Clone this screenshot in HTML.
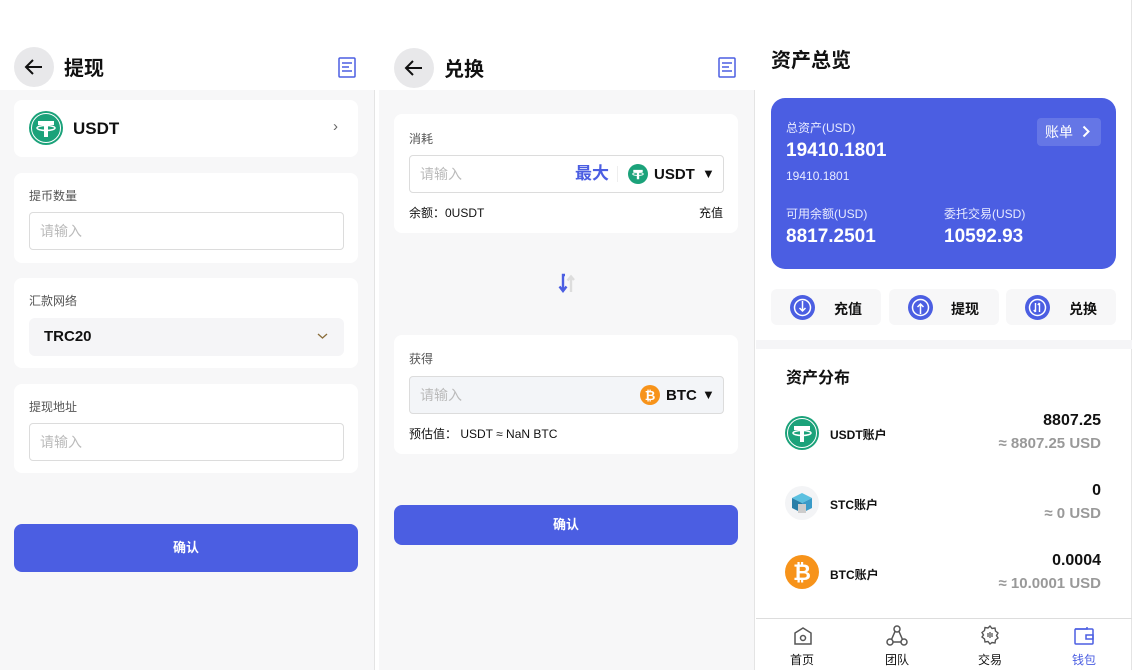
<!DOCTYPE html>
<html><head><meta charset="utf-8"><style>
*{margin:0;padding:0;box-sizing:border-box}
body{width:1137px;height:670px;background:#fff;position:relative;overflow:hidden;font-family:"Liberation Sans","Noto Sans CJK SC",sans-serif;color:#111}
.a{position:absolute}
.p{position:absolute;top:0;height:670px;background:#f7f7f8}
.card{position:absolute;background:#fff;border-radius:8px}
.lbl{position:absolute;font-size:12px;color:#555}
.inp{position:absolute;border:1px solid #dcdcdc;border-radius:4px;background:#fff;font-size:14px;color:#bbb;padding-left:10px;line-height:36px}
.btn{position:absolute;background:#4b5ee2;border-radius:8px;color:#fff;font-weight:bold;font-size:13px;text-align:center}
.back{position:absolute;width:40px;height:40px;border-radius:50%;background:#e8e8ea}
.ttl{position:absolute;font-size:20px;font-weight:bold}
.b{font-weight:bold}
.t{position:absolute;white-space:nowrap}
</style></head><body>

<!-- LEFT -->
<div class="p" style="left:0;width:375px;border-right:1px solid #e4e4e4"></div>
<div class="a" style="left:0;top:0;width:375px;height:90px;background:#fff"></div>
<div class="back" style="left:14px;top:47px"></div>
<svg class="a" style="left:23px;top:56px" width="22" height="22" viewBox="0 0 22 22"><path d="M19 11H3M10 4L3 11L10 18" stroke="#111" stroke-width="2" fill="none"/></svg>
<div class="ttl" style="left:64px;top:52px">提现</div>
<svg class="a" style="left:338px;top:57px" width="18" height="21" viewBox="0 0 18 21"><rect x="1" y="1" width="16" height="19" rx="1" fill="none" stroke="#4b5ee2" stroke-width="1.5"/><path d="M4 6h10M4 10h7M4 14h10" stroke="#4b5ee2" stroke-width="1.5"/></svg>

<div class="card" style="left:14px;top:100px;width:344px;height:57px"></div>
<svg class="a" style="left:29px;top:111px" width="34" height="34" viewBox="0 0 34 34"><circle cx="17" cy="17" r="17" fill="#1ba27a"/><circle cx="17" cy="17" r="14.5" fill="none" stroke="#fff" stroke-width="1"/><path d="M9 10h16v4h-6v12h-4V14H9z" fill="#fff"/><ellipse cx="17" cy="17" rx="9" ry="2.5" fill="none" stroke="#fff" stroke-width="1.5"/></svg>
<div class="t b" style="left:73px;top:119px;font-size:17px">USDT</div>
<div class="t" style="left:333px;top:118px;font-size:15px;color:#666">›</div>

<div class="card" style="left:14px;top:173px;width:344px;height:90px"></div>
<div class="lbl" style="left:29px;top:187px">提币数量</div>
<div class="inp" style="left:29px;top:212px;width:315px;height:38px">请输入</div>

<div class="card" style="left:14px;top:278px;width:344px;height:90px"></div>
<div class="lbl" style="left:29px;top:292px">汇款网络</div>
<div class="a" style="left:29px;top:318px;width:315px;height:38px;background:#f5f5f7;border-radius:6px"></div>
<div class="t b" style="left:44px;top:328px;font-size:15px">TRC20</div>
<svg class="a" style="left:317px;top:332px" width="11" height="8" viewBox="0 0 11 8"><path d="M1 2l4.5 4L10 2" stroke="#8a6d3b" stroke-width="1.3" fill="none"/></svg>

<div class="card" style="left:14px;top:384px;width:344px;height:89px"></div>
<div class="lbl" style="left:29px;top:398px">提现地址</div>
<div class="inp" style="left:29px;top:423px;width:315px;height:38px">请输入</div>

<div class="btn" style="left:14px;top:524px;width:344px;height:48px;line-height:48px">确认</div>

<!-- MIDDLE -->
<div class="p" style="left:379px;width:376px;border-right:1px solid #e4e4e4"></div>
<div class="a" style="left:379px;top:0;width:376px;height:90px;background:#fff"></div>
<div class="back" style="left:394px;top:48px"></div>
<svg class="a" style="left:403px;top:57px" width="22" height="22" viewBox="0 0 22 22"><path d="M19 11H3M10 4L3 11L10 18" stroke="#111" stroke-width="2" fill="none"/></svg>
<div class="ttl" style="left:444px;top:53px">兑换</div>
<svg class="a" style="left:718px;top:57px" width="18" height="21" viewBox="0 0 18 21"><rect x="1" y="1" width="16" height="19" rx="1" fill="none" stroke="#4b5ee2" stroke-width="1.5"/><path d="M4 6h10M4 10h7M4 14h10" stroke="#4b5ee2" stroke-width="1.5"/></svg>

<div class="card" style="left:394px;top:114px;width:344px;height:119px"></div>
<div class="lbl" style="left:409px;top:130px">消耗</div>
<div class="inp" style="left:409px;top:155px;width:315px;height:38px">请输入</div>
<div class="t b" style="left:575px;top:164px;font-size:17px;color:#4b5ee2;line-height:20px">最大</div>
<div class="a" style="left:617px;top:166px;width:1px;height:16px;background:#eee"></div>
<svg class="a" style="left:628px;top:164px" width="20" height="20" viewBox="0 0 34 34"><circle cx="17" cy="17" r="17" fill="#1ba27a"/><path d="M9 10h16v4h-6v12h-4V14H9z" fill="#fff"/><ellipse cx="17" cy="17" rx="9" ry="2.5" fill="none" stroke="#fff" stroke-width="1.5"/></svg>
<div class="t b" style="left:654px;top:166px;font-size:15px">USDT</div>
<div class="t" style="left:702px;top:166px;font-size:13px">▼</div>
<div class="t" style="left:409px;top:204px;font-size:12px">余额：0USDT</div>
<div class="t" style="left:699px;top:204px;font-size:12px">充值</div>

<svg class="a" style="left:556px;top:272px" width="22" height="22" viewBox="0 0 22 22"><path d="M15 20V5M11.5 8.5L15 4.5L18 8" stroke="#ddd" stroke-width="2.4" fill="none"/><path d="M9 3H7v15M3.5 14.5L7 19l3.5-4.5" stroke="#4b5ee2" stroke-width="2.4" fill="none"/></svg>

<div class="card" style="left:394px;top:335px;width:344px;height:119px"></div>
<div class="lbl" style="left:409px;top:350px">获得</div>
<div class="inp" style="left:409px;top:376px;width:315px;height:38px;background:#f3f5f8">请输入</div>
<svg class="a" style="left:640px;top:385px" width="20" height="20" viewBox="0 0 20 20"><circle cx="10" cy="10" r="10" fill="#f7931a"/><text x="10" y="15" font-size="13" font-weight="bold" fill="#fff" text-anchor="middle" font-family="Liberation Sans">₿</text></svg>
<div class="t b" style="left:666px;top:387px;font-size:15px">BTC</div>
<div class="t" style="left:702px;top:387px;font-size:13px">▼</div>
<div class="t" style="left:409px;top:425px;font-size:12px">预估值：&nbsp;USDT ≈ NaN BTC</div>

<div class="btn" style="left:394px;top:505px;width:344px;height:40px;line-height:40px">确认</div>

<!-- RIGHT -->
<div class="a" style="left:756px;top:0;width:376px;height:670px;background:#fff;border-right:1px solid #e4e4e4"></div>
<div class="ttl" style="left:771px;top:44px">资产总览</div>
<div class="a" style="left:771px;top:98px;width:345px;height:171px;background:#4b5ee2;border-radius:14px"></div>
<div class="t" style="left:786px;top:119px;font-size:12px;color:#e8ebff">总资产(USD)</div>
<div class="t b" style="left:786px;top:140px;font-size:19px;color:#fff">19410.1801</div>
<div class="t" style="left:786px;top:169px;font-size:12px;color:#e8ebff">19410.1801</div>
<div class="a" style="left:1037px;top:118px;width:64px;height:28px;background:rgba(255,255,255,.15);border-radius:4px;color:#fff;font-size:14px;line-height:28px;padding-left:8px">账单</div>
<svg class="a" style="left:1082px;top:125px" width="8" height="13" viewBox="0 0 8 13"><path d="M1.5 1.5l5 5-5 5" stroke="#fff" stroke-width="2" fill="none"/></svg>
<div class="t" style="left:786px;top:205px;font-size:12px;color:#e8ebff">可用余额(USD)</div>
<div class="t b" style="left:786px;top:226px;font-size:19px;color:#fff">8817.2501</div>
<div class="t" style="left:944px;top:205px;font-size:12px;color:#e8ebff">委托交易(USD)</div>
<div class="t b" style="left:944px;top:226px;font-size:19px;color:#fff">10592.93</div>

<div class="a" style="left:771px;top:289px;width:110px;height:36px;background:#f7f7f8;border-radius:6px"></div>
<div class="a" style="left:889px;top:289px;width:110px;height:36px;background:#f7f7f8;border-radius:6px"></div>
<div class="a" style="left:1006px;top:289px;width:110px;height:36px;background:#f7f7f8;border-radius:6px"></div>
<svg class="a" style="left:790px;top:295px" width="25" height="25" viewBox="0 0 25 25"><circle cx="12.5" cy="12.5" r="12.5" fill="#4b5ee2"/><circle cx="12.5" cy="12.5" r="8" fill="none" stroke="#fff" stroke-width="1.5"/><path d="M12.5 6v10M9.5 13l3 3 3-3" stroke="#fff" stroke-width="1.5" fill="none"/></svg>
<svg class="a" style="left:908px;top:295px" width="25" height="25" viewBox="0 0 25 25"><circle cx="12.5" cy="12.5" r="12.5" fill="#4b5ee2"/><circle cx="12.5" cy="12.5" r="8" fill="none" stroke="#fff" stroke-width="1.5"/><path d="M12.5 19V9M9.5 12l3-3 3 3" stroke="#fff" stroke-width="1.5" fill="none"/></svg>
<svg class="a" style="left:1025px;top:295px" width="25" height="25" viewBox="0 0 25 25"><circle cx="12.5" cy="12.5" r="12.5" fill="#4b5ee2"/><circle cx="12.5" cy="12.5" r="8" fill="none" stroke="#fff" stroke-width="1.5"/><path d="M10.5 8v9M8.8 15l1.7 2M14.5 17V8M12.8 10l1.7-2" stroke="#fff" stroke-width="1.4" fill="none"/></svg>
<div class="t b" style="left:834px;top:299px;font-size:14px">充值</div>
<div class="t b" style="left:951px;top:299px;font-size:14px">提现</div>
<div class="t b" style="left:1069px;top:299px;font-size:14px">兑换</div>

<div class="a" style="left:756px;top:340px;width:376px;height:9px;background:#f5f5f7"></div>
<div class="t b" style="left:786px;top:364px;font-size:16px">资产分布</div>

<svg class="a" style="left:785px;top:416px" width="34" height="34" viewBox="0 0 34 34"><circle cx="17" cy="17" r="17" fill="#1ba27a"/><circle cx="17" cy="17" r="14.5" fill="none" stroke="#fff" stroke-width="1"/><path d="M9 10h16v4h-6v12h-4V14H9z" fill="#fff"/><ellipse cx="17" cy="17" rx="9" ry="2.5" fill="none" stroke="#fff" stroke-width="1.5"/></svg>
<div class="t b" style="left:830px;top:426px;font-size:12px">USDT账户</div>
<div class="t b" style="right:36px;top:412px;font-size:16px">8807.25</div>
<div class="t b" style="right:36px;top:435px;font-size:15px;color:#999">≈ 8807.25 USD</div>

<svg class="a" style="left:785px;top:486px" width="34" height="34" viewBox="0 0 34 34"><circle cx="17" cy="17" r="17" fill="#f3f4f6"/><path d="M7 12l10-5 10 5-10 5z" fill="#5bc0e0"/><path d="M7 12v10l10 5V17z" fill="#2a7fa8"/><path d="M27 12v10l-10 5V17z" fill="#3a9bc8"/><rect x="13" y="18" width="8" height="9" fill="#ccc"/></svg>
<div class="t b" style="left:830px;top:496px;font-size:12px">STC账户</div>
<div class="t b" style="right:36px;top:482px;font-size:16px">0</div>
<div class="t b" style="right:36px;top:505px;font-size:15px;color:#999">≈ 0 USD</div>

<svg class="a" style="left:785px;top:555px" width="34" height="34" viewBox="0 0 34 34"><circle cx="17" cy="17" r="17" fill="#f7931a"/><text x="17" y="25" font-size="22" font-weight="bold" fill="#fff" text-anchor="middle" font-family="Liberation Sans">₿</text></svg>
<div class="t b" style="left:830px;top:566px;font-size:12px">BTC账户</div>
<div class="t b" style="right:36px;top:552px;font-size:16px">0.0004</div>
<div class="t b" style="right:36px;top:575px;font-size:15px;color:#999">≈ 10.0001 USD</div>

<div class="a" style="left:756px;top:618px;width:376px;height:1px;background:#ddd"></div>
<svg class="a" style="left:792px;top:625px" width="22" height="22" viewBox="0 0 22 22"><path d="M3 8l8-5 8 5v11H3z" fill="none" stroke="#555" stroke-width="1.5"/><circle cx="11" cy="13" r="2.5" fill="none" stroke="#555" stroke-width="1.5"/></svg>
<svg class="a" style="left:885px;top:624px" width="24" height="24" viewBox="0 0 24 24"><circle cx="12" cy="5" r="3" fill="none" stroke="#555" stroke-width="1.5"/><circle cx="5" cy="18" r="3" fill="none" stroke="#555" stroke-width="1.5"/><circle cx="19" cy="18" r="3" fill="none" stroke="#555" stroke-width="1.5"/><path d="M10 7.5L6.5 15.5M14 7.5l3.5 8M8 18h8" stroke="#555" stroke-width="1.5"/></svg>
<svg class="a" style="left:979px;top:624px" width="22" height="22" viewBox="0 0 22 22"><path d="M11 2l2 2.5 3-.5.5 3 2.5 2-1.5 2.5 1.5 2.5-2.5 2-.5 3-3-.5L11 20l-2-2.5-3 .5-.5-3-2.5-2L4.5 11 3 8.5l2.5-2 .5-3 3 .5z" fill="none" stroke="#555" stroke-width="1.4"/><path d="M9 9v4M11 8v6M13 9v4" stroke="#555" stroke-width="1.3"/></svg>
<svg class="a" style="left:1073px;top:625px" width="22" height="22" viewBox="0 0 22 22"><rect x="2" y="4" width="18" height="15" rx="1" fill="none" stroke="#4b5ee2" stroke-width="1.5"/><path d="M2 4h12v-2" stroke="#4b5ee2" stroke-width="1.5" fill="none"/><rect x="13" y="10" width="7" height="4" fill="none" stroke="#4b5ee2" stroke-width="1.5"/></svg>
<div class="t" style="left:790px;top:651px;font-size:12px">首页</div>
<div class="t" style="left:885px;top:651px;font-size:12px">团队</div>
<div class="t" style="left:978px;top:651px;font-size:12px">交易</div>
<div class="t" style="left:1072px;top:651px;font-size:12px;color:#4b5ee2">钱包</div>
</body></html>
